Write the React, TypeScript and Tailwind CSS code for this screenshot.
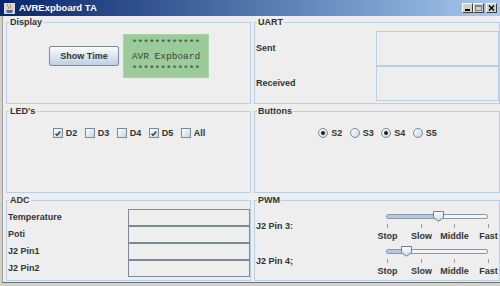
import React from 'react';

const font = "font-['Liberation_Sans',Arial,sans-serif]";

function Panel({ title, children }: { title: string; children?: React.ReactNode }) {
  return (
    <fieldset className="border border-[#b8cfe5] h-full min-w-0">
      <legend className="ml-[2px] px-[1px] leading-[10px]">{title}</legend>
      {children}
    </fieldset>
  );
}

function CheckBox({ label, checked }: { label: string; checked?: boolean }) {
  return (
    <div className="flex items-center">
      <span className="w-[10px] h-[10px] border border-[#7a8a99] bg-linear-to-br from-white to-[#c4d5e6] flex items-center justify-center">
        {checked && (
          <svg width="8" height="8" viewBox="0 0 8 8">
            <path d="M1.5 4.8 L3 6.3 L6.3 2.5" stroke="#333" strokeWidth="1.3" fill="none" />
          </svg>
        )}
      </span>
      <span className="ml-[3px] leading-[10px]">{label}</span>
    </div>
  );
}

function Radio({ label, checked }: { label: string; checked?: boolean }) {
  return (
    <div className="flex items-center">
      <span className="w-[10px] h-[10px] rounded-full border border-[#7a8a99] bg-linear-to-br from-white to-[#c4d5e6] flex items-center justify-center">
        {checked && <span className="w-[4px] h-[4px] rounded-full bg-[#222]" />}
      </span>
      <span className="ml-[3px] leading-[10px]">{label}</span>
    </div>
  );
}

function Slider({ thumb }: { thumb: number }) {
  const ticks = [10, 44, 77, 111];
  const labels = ['Stop', 'Slow', 'Middle', 'Fast'];
  return (
    <div className="relative w-[122px] h-[35px]">
      <div className="absolute left-[9px] top-[5px] w-[102px] h-[5px] rounded-[2px] border border-[#8c9aa8] bg-[#f2f4f7]" />
      <div
        className="absolute left-[10px] top-[6px] h-[3px] bg-[#b3c9e1]"
        style={{ width: thumb - 10 }}
      />
      <svg className="absolute top-[2px]" style={{ left: thumb - 5 }} width="11" height="11" viewBox="0 0 11 11">
        <defs>
          <linearGradient id="th" x1="0" y1="0" x2="0" y2="1">
            <stop offset="0" stopColor="#ffffff" />
            <stop offset="1" stopColor="#c9d9ea" />
          </linearGradient>
        </defs>
        <path d="M0.5 0.5 H10.5 V6.5 L5.5 10.3 L0.5 6.5 Z" fill="url(#th)" stroke="#6f7f90" />
      </svg>
      {ticks.map((t, i) => (
        <React.Fragment key={t}>
          <div className="absolute top-[15px] w-px h-[4px] bg-[#9a9a9a]" style={{ left: t }} />
          <span className="absolute top-[22px] leading-[10px] -translate-x-1/2 whitespace-nowrap" style={{ left: t + 0.5 }}>
            {labels[i]}
          </span>
        </React.Fragment>
      ))}
    </div>
  );
}

export default function App() {
  return (
    <div className={`w-[500px] h-[286px] overflow-hidden bg-[#d4d0c8] ${font} text-[9px] font-bold text-[#333]`}>
      {/* title bar */}
      <div className="h-[16px] flex items-center bg-linear-to-r from-[#0a246a] to-[#a6caf0] pl-[4px] pr-[3px]">
        <svg width="11" height="11" viewBox="0 0 11 11">
          <rect x="0" y="0" width="11" height="11" fill="#d9d9d9" />
          <path d="M4 1 C2 3 6 4 4 6 M6.5 1.5 C5 3 8 4 6.5 5.5" stroke="#d2691e" strokeWidth="1" fill="none" />
          <path d="M2 7 H9 L8 10 H3 Z" fill="#4a6fa5" />
        </svg>
        <span className="ml-[4px] text-white text-[9.5px] leading-[10px]">AVRExpboard TA</span>
        <div className="ml-auto flex items-center">
          <div className="w-[11px] h-[10px] bg-[#d4d0c8] border border-t-white border-l-white border-r-[#404040] border-b-[#404040] flex items-end justify-center pb-[1px]">
            <span className="w-[5px] h-[2px] bg-black" />
          </div>
          <div className="w-[11px] h-[10px] bg-[#d4d0c8] border border-t-white border-l-white border-r-[#404040] border-b-[#404040] flex items-center justify-center">
            <span className="w-[7px] h-[6px] border border-t-2 border-[#808080]" />
          </div>
          <div className="ml-[2px] w-[11px] h-[10px] bg-[#d4d0c8] border border-t-white border-l-white border-r-[#404040] border-b-[#404040] flex items-center justify-center">
            <svg width="7" height="6" viewBox="0 0 7 6">
              <path d="M1 0.5 L6 5.5 M6 0.5 L1 5.5" stroke="#000" strokeWidth="1.4" />
            </svg>
          </div>
        </div>
      </div>

      {/* client area */}
      <div className="ml-[2px] h-[266px] border-l border-[#a0a0a0] bg-[#eeeeee] pl-[3px] pt-[1px] grid grid-cols-[245px_246px] grid-rows-[87px_87px_86px] gap-x-[3px] gap-y-[2px]">
        <Panel title="Display">
          <div className="pt-[7px] flex justify-center items-center gap-[4px] pl-[1px]">
            <button className="w-[70px] h-[20px] border border-[#7a8a99] rounded-[2px] bg-linear-to-b from-[#fbfcfe] to-[#bdd0e4] text-[#333] font-bold text-[9px] leading-[10px]">
              Show Time
            </button>
            <div className="w-[86px] h-[44px] bg-[#99cc99] border border-[#a9d4a9] flex flex-col items-center justify-center font-['Liberation_Mono',monospace] font-normal text-[9.5px] leading-[13px] text-[#3f3f3f]">
              <span>************</span>
              <span>AVR Expboard</span>
              <span>************</span>
            </div>
          </div>
        </Panel>

        <Panel title="UART">
          <div className="pt-[4px] flex flex-col">
            <div className="flex items-center justify-between h-[35px]">
              <span className="pl-[1px]">Sent</span>
              <div className="w-[123px] h-full border border-[#b8cfe5]" />
            </div>
            <div className="flex items-center justify-between h-[35px]">
              <span className="pl-[1px]">Received</span>
              <div className="w-[123px] h-full border border-[#b8cfe5]" />
            </div>
          </div>
        </Panel>

        <Panel title="LED's">
          <div className="pt-[12px] flex justify-center gap-[7.5px] pl-[1px]">
            <CheckBox label="D2" checked />
            <CheckBox label="D3" />
            <CheckBox label="D4" />
            <CheckBox label="D5" checked />
            <CheckBox label="All" />
          </div>
        </Panel>

        <Panel title="Buttons">
          <div className="pt-[12px] flex justify-center gap-[7.5px] pl-[1px]">
            <Radio label="S2" checked />
            <Radio label="S3" />
            <Radio label="S4" checked />
            <Radio label="S5" />
          </div>
        </Panel>

        <Panel title="ADC">
          <div className="pt-[4px] flex flex-col">
            {['Temperature', 'Poti', 'J2 Pin1', 'J2 Pin2'].map((l) => (
              <div key={l} className="flex items-center justify-between h-[17px]">
                <span className="pl-[1px]">{l}</span>
                <div className="w-[122px] h-full border border-[#7a8a99]" />
              </div>
            ))}
          </div>
        </Panel>

        <Panel title="PWM">
          <div className="pt-[4px] flex flex-col">
            <div className="flex items-center justify-between">
              <span className="pl-[1px]">J2 Pin 3:</span>
              <Slider thumb={61} />
            </div>
            <div className="flex items-center justify-between">
              <span className="pl-[1px]">J2 Pin 4;</span>
              <Slider thumb={29} />
            </div>
          </div>
        </Panel>
      </div>
      <div className="ml-[2px] h-px bg-[#707070]" />
    </div>
  );
}
